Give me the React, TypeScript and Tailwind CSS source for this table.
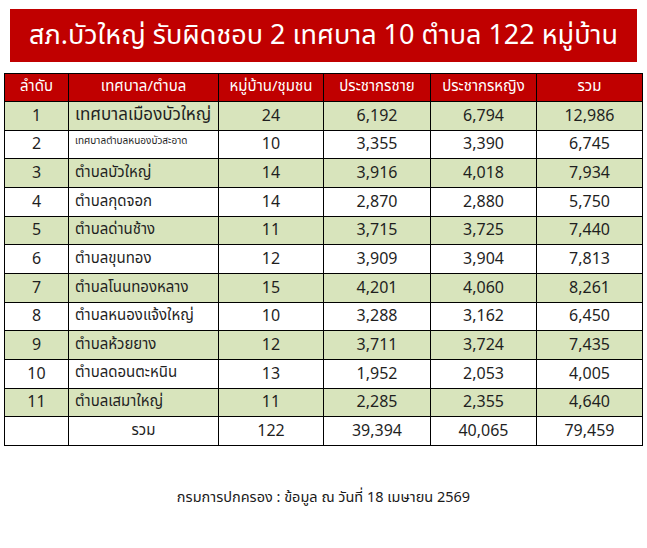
import React from 'react';

interface Row {
  no: string;
  name: string;
  villages: string;
  male: string;
  female: string;
  total: string;
  nameSize?: string;
}

const rows: Row[] = [
  { no: '1', name: 'เทศบาลเมืองบัวใหญ่', villages: '24', male: '6,192', female: '6,794', total: '12,986', nameSize: 'text-[17px]' },
  { no: '2', name: 'เทศบาลตำบลหนองบัวสะอาด', villages: '10', male: '3,355', female: '3,390', total: '6,745', nameSize: 'text-[10px] align-top pt-[3px]' },
  { no: '3', name: 'ตำบลบัวใหญ่', villages: '14', male: '3,916', female: '4,018', total: '7,934' },
  { no: '4', name: 'ตำบลกุดจอก', villages: '14', male: '2,870', female: '2,880', total: '5,750' },
  { no: '5', name: 'ตำบลด่านช้าง', villages: '11', male: '3,715', female: '3,725', total: '7,440' },
  { no: '6', name: 'ตำบลขุนทอง', villages: '12', male: '3,909', female: '3,904', total: '7,813' },
  { no: '7', name: 'ตำบลโนนทองหลาง', villages: '15', male: '4,201', female: '4,060', total: '8,261' },
  { no: '8', name: 'ตำบลหนองแจ้งใหญ่', villages: '10', male: '3,288', female: '3,162', total: '6,450' },
  { no: '9', name: 'ตำบลห้วยยาง', villages: '12', male: '3,711', female: '3,724', total: '7,435' },
  { no: '10', name: 'ตำบลดอนตะหนิน', villages: '13', male: '1,952', female: '2,053', total: '4,005' },
  { no: '11', name: 'ตำบลเสมาใหญ่', villages: '11', male: '2,285', female: '2,355', total: '4,640' },
];

const headers = ['ลำดับ', 'เทศบาล/ตำบล', 'หมู่บ้าน/ชุมชน', 'ประชากรชาย', 'ประชากรหญิง', 'รวม'];

const font = { fontFamily: 'Tahoma, "Noto Sans Thai", Loma, Garuda, "Noto Sans", sans-serif' };

export default function App() {
  return (
    <div className="w-[647px] h-[548px] bg-white text-[#1f1f1f]" style={font}>
      <div className="pt-[9px] px-[10px]">
        <div className="h-[53px] bg-[#c00000] flex items-center justify-center text-white text-[27px] leading-none">
          สภ.บัวใหญ่ รับผิดชอบ 2 เทศบาล 10 ตำบล 122 หมู่บ้าน
        </div>
      </div>

      <div className="pl-[4px] pt-[11px]">
        <table className="border-collapse w-[638px] table-fixed text-[16px]">
          <colgroup>
            <col className="w-[64px]" />
            <col className="w-[150px]" />
            <col className="w-[105px]" />
            <col className="w-[107px]" />
            <col className="w-[106px]" />
            <col className="w-[106px]" />
          </colgroup>
          <thead>
            <tr className="h-[28px] bg-[#c00000] text-white text-[15px]">
              {headers.map((h) => (
                <th key={h} className="border border-black font-normal text-center">
                  {h}
                </th>
              ))}
            </tr>
          </thead>
          <tbody>
            {rows.map((r, i) => (
              <tr key={r.no} className={`h-[28.67px] ${i % 2 === 0 ? 'bg-[#d8e4bc]' : 'bg-white'}`}>
                <td className="border border-black text-center">{r.no}</td>
                <td className={`border border-black pl-[6px] whitespace-nowrap ${r.nameSize ?? 'text-[15px]'}`}>
                  {r.name}
                </td>
                <td className="border border-black text-center">{r.villages}</td>
                <td className="border border-black text-center">{r.male}</td>
                <td className="border border-black text-center">{r.female}</td>
                <td className="border border-black text-center">{r.total}</td>
              </tr>
            ))}
            <tr className="h-[28.67px] bg-white">
              <td className="border border-black"></td>
              <td className="border border-black text-center text-[15px]">รวม</td>
              <td className="border border-black text-center">122</td>
              <td className="border border-black text-center">39,394</td>
              <td className="border border-black text-center">40,065</td>
              <td className="border border-black text-center">79,459</td>
            </tr>
          </tbody>
        </table>
      </div>

      <div className="pt-[42px] text-center text-[14.5px] text-[#1a1a1a]">
        กรมการปกครอง : ข้อมูล ณ วันที่ 18 เมษายน 2569
      </div>
    </div>
  );
}
